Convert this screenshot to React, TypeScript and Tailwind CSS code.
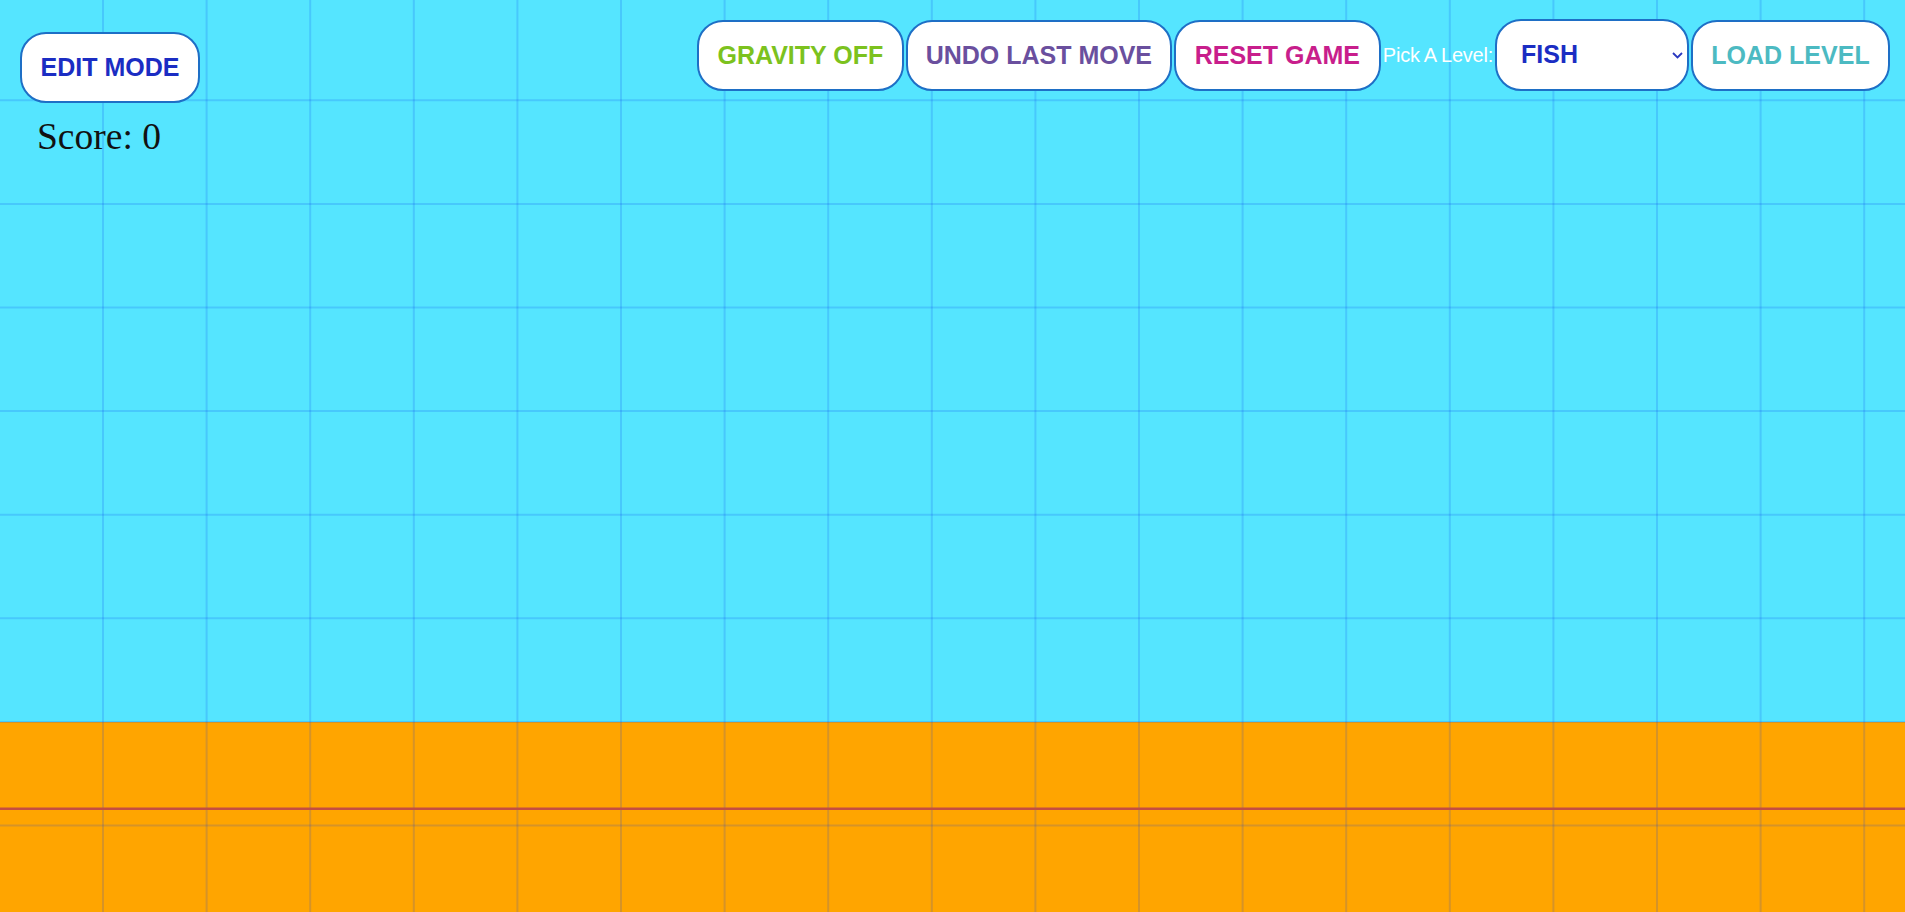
import React from "react";

const CELL = 103.6;
const XS = Array.from({ length: 19 }, (_, k) => 103 + CELL * k);
const YS = Array.from({ length: 9 }, (_, k) => 100.3 + CELL * k);

function GameCanvas() {
  return (
    <div className="absolute inset-0 flex flex-col">
      <div className="flex-1 bg-[#55e5ff]" />
      <div className="h-[190px] bg-[#ffa500]" />
      <svg className="absolute inset-0 h-full w-full" width="1905" height="912">
        {XS.map((x) => (
          <line key={"x" + x} x1={x} y1={0} x2={x} y2={912} stroke="rgba(5,59,235,0.17)" strokeWidth={2} />
        ))}
        {YS.map((y) => (
          <line key={"y" + y} x1={0} y1={y} x2={1905} y2={y} stroke="rgba(5,59,235,0.17)" strokeWidth={2} />
        ))}
        <line x1={0} y1={808.8} x2={1905} y2={808.8} stroke="#c44e40" strokeWidth={2.5} />
      </svg>
    </div>
  );
}

const btn =
  "flex h-[71px] items-center justify-center rounded-[26px] border-2 border-[#1e6fc6] bg-white px-[18px] text-[25px] font-bold leading-none whitespace-nowrap";

export default function App() {
  return (
    <div
      className="relative h-[912px] w-full overflow-hidden"
      style={{ fontFamily: '"Liberation Sans", Arial, sans-serif' }}
    >
      <GameCanvas />
      <div className="relative z-10 flex items-start justify-between">
        <div className="flex flex-col items-start pl-[20px] pt-[32px]">
          <button className={btn + " h-[69px] w-[180px] text-[#1b2dc3]"}>EDIT MODE</button>
          <div
            className="ml-[17px] mt-[13px] text-[37.5px] leading-[41px] text-[#111]"
            style={{ fontFamily: '"Liberation Serif", "Times New Roman", serif' }}
          >
            Score: 0
          </div>
        </div>
        <div className="flex items-center gap-[2px] pr-[15px] pt-[19px]">
          <button className={btn + " w-[207px] text-[#7cc21e]"}>GRAVITY OFF</button>
          <button className={btn + " w-[266px] text-[#6a4f9e]"}>UNDO LAST MOVE</button>
          <button className={btn + " w-[207px] text-[#c81e8c]"}>RESET GAME</button>
          <span className="text-[20px] tracking-[-0.25px] text-white">Pick A Level:</span>
          <div className="flex h-[72px] w-[194px] items-center justify-between rounded-[26px] border-2 border-[#1e6fc6] bg-white pl-[24px] pr-[4px]">
            <span className="text-[25px] font-bold text-[#1b2dc3]">FISH</span>
            <svg width="11" height="7" viewBox="0 0 11 7">
              <path d="M1 1 L5.5 5.5 L10 1" fill="none" stroke="#2a38c0" strokeWidth="1.8" />
            </svg>
          </div>
          <button className={btn + " w-[199px] text-[#4cbac2]"}>LOAD LEVEL</button>
        </div>
      </div>
    </div>
  );
}
